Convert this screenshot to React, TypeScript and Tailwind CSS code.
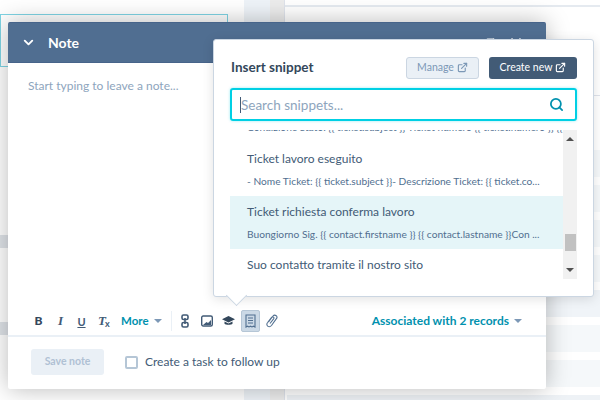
import { ArrowUpRight, ChevronDown, ExternalLink, Search, X } from 'lucide-react';

const font = { row: 'whitespace-nowrap text-[10.2px] leading-[16px] text-[#516f90]' };

const Caret = ({ className }: { className: string }) => (
  <span className={`h-0 w-0 border-x-[4px] border-t-[4px] border-x-transparent ${className}`} />
);

const Snippet = ({ title, body, active }: { title: string; body: string; active?: boolean }) => (
  <div className={`h-[53px] shrink-0 pl-[17px] pt-[7px] ${active ? 'bg-[#e5f5f8]' : ''}`}>
    <div className="text-[12px] leading-[18px] text-[#425b76]">{title}</div>
    <div className={`mt-[5px] ${font.row}`}>{body}</div>
  </div>
);

function Toolbar() {
  return (
    <div className="flex h-[38px] items-center justify-between border-b-2 border-[#eaf0f6] pl-[25px] pr-[24px] pt-[8px]">
      <div className="flex items-center">
        <span className="w-[11px] text-center text-[12px] font-black text-[#33475b]">B</span>
        <span className="ml-[11px] w-[11px] text-center font-['Liberation_Serif',serif] text-[13px] font-bold italic text-[#425b76]">I</span>
        <span className="ml-[10px] w-[11px] text-center text-[11px] font-bold leading-[13px] text-[#425b76] underline">U</span>
        <span className="relative ml-[11px] w-[11px] font-['Liberation_Serif',serif] text-[13px] font-bold italic text-[#425b76]">
          T
          <span className="absolute left-[7px] top-[6px] font-['Lato',sans-serif] text-[9px] not-italic">x</span>
        </span>
        <span className="ml-[12px] w-[28px] whitespace-nowrap text-[11.5px] font-bold text-[#0091ae]">More</span>
        <Caret className="ml-[5px] border-t-[#7c98b6]" />
        <span className="ml-[9px] h-[20px] w-px bg-[#eaf0f6]" />
        <svg className="ml-[8px] h-[14px] w-[10px]" viewBox="0 0 10 14" fill="none" stroke="#425b76" strokeWidth="1.6">
          <rect x="2" y="1" width="6" height="4.5" rx="1.5" />
          <rect x="2" y="8.5" width="6" height="4.5" rx="1.5" />
          <path d="M5 4v6" />
        </svg>
        <svg className="ml-[11px] h-[12px] w-[12px]" viewBox="0 0 12 12">
          <rect x=".7" y="1" width="10.6" height="10" rx="1.5" fill="#fff" stroke="#425b76" strokeWidth="1.4" />
          <path d="M2 10l3.5-3 1.5 1 3-3v5z" fill="#425b76" />
        </svg>
        <svg className="ml-[9px] h-[12px] w-[13px]" viewBox="0 0 13 12" fill="#33475b">
          <path d="M6.5 1L13 4.2 6.5 7.4 0 4.2z" />
          <path d="M2.5 6.6v2.2c1 1.3 7 1.3 8 0V6.6L6.500 8.600z" />
        </svg>
        <span className="ml-[6px] flex h-[22px] w-[19px] items-center justify-center rounded-[2px] border border-[#b5c6d6] bg-[#cbd9e6]">
          <svg className="h-[14px] w-[11px]" viewBox="0 0 11 14" fill="none" stroke="#516f90" strokeWidth="1.1">
            <path d="M1 1h9v12l-1.500-.8-1.500.8-1.500-.8-1.500.8-1.500-.8-1.500.8z" />
            <path d="M3 4h5M3 6.500h5M3 9h5" />
          </svg>
        </span>
        <svg className="ml-[6px] h-[14px] w-[12px]" viewBox="0 0 12 14" fill="none" stroke="#516f90" strokeWidth="1.1">
          <path d="M2.500 8l4.500-6c1-1.200 2.400-.9 3.200-.3.800.7 1 2 .2 3L5.500 11.500c-1.300 1.500-2.800 1.400-3.800.6-1-.8-1.200-2.300-.1-3.600l4-5.200c.6-.7 1.400-.6 1.900-.2.500.4.600 1.100.1 1.800L4 9.500" />
        </svg>
      </div>
      <div className="flex items-center">
        <span className="text-[12px] font-bold text-[#0091ae]">Associated with 2 records</span>
        <Caret className="ml-[5px] border-t-[#7c98b6]" />
      </div>
    </div>
  );
}

function NoteWindow() {
  return (
    <div className="absolute left-[8px] top-[22px] flex h-[367px] w-[538px] flex-col rounded-[2px] bg-white shadow-[0_0_24px_rgba(0,0,0,0.28)]">
      <div className="flex h-[41px] shrink-0 items-center justify-between rounded-t-[2px] border-y border-[#47648a] bg-[#506e91] pl-[13px] pr-[22px]">
        <div className="flex items-center">
          <ChevronDown className="h-[15px] w-[15px] text-white" strokeWidth={3} />
          <span className="ml-[12px] text-[14px] font-bold text-white">Note</span>
        </div>
        <div className="flex items-center gap-[10px]">
          <ArrowUpRight className="h-[15px] w-[15px] text-white" strokeWidth={2.5} />
          <X className="h-[16px] w-[16px] text-white" strokeWidth={2.5} />
        </div>
      </div>
      <div className="flex-1 pl-[20px] pt-[14px] text-[12px] leading-[18px] text-[#8ea5bd]">Start typing to leave a note...</div>
      <Toolbar />
      <div className="flex h-[52px] shrink-0 items-center pb-[2px] pl-[23px]">
        <span className="flex h-[26px] w-[73px] items-center justify-center rounded-[3px] bg-[#eaf0f6] text-[10.5px] font-bold text-[#b0c1d4]">Save note</span>
        <span className="ml-[21px] h-[13px] w-[13px] rounded-[2px] border-2 border-[#b5c6d6] bg-white" />
        <span className="ml-[7px] text-[12px] text-[#425b76]">Create a task to follow up</span>
      </div>
    </div>
  );
}

function SnippetPopover() {
  return (
    <div className="absolute left-[213px] top-[39px] h-[258px] w-[381px] rounded-[3px] border border-[#cbd6e2] bg-white px-[16px] shadow-[0_2px_12px_rgba(0,0,0,0.12)]">
      <div className="flex h-[48px] items-center justify-between pt-[7px]">
        <span className="pl-[1px] text-[13.5px] font-bold text-[#33475b]">Insert snippet</span>
        <div className="flex items-center gap-[10px]">
          <span className="flex h-[22px] w-[73px] items-center justify-center gap-[3px] rounded-[3px] border border-[#cbd6e2] bg-[#eaf0f6] text-[10.5px] text-[#7c98b6]">
            Manage <ExternalLink className="h-[11px] w-[11px]" strokeWidth={2.5} />
          </span>
          <span className="flex h-[22px] w-[88px] items-center justify-center gap-[3px] rounded-[3px] bg-[#425b76] text-[10.5px] text-white">
            Create new <ExternalLink className="h-[11px] w-[11px]" strokeWidth={2.5} />
          </span>
        </div>
      </div>
      <div className="flex h-[33px] items-center justify-between rounded-[3px] border-2 border-[#00d0e4] pl-[8px] pr-[11px] shadow-[0_0_3px_rgba(0,208,228,0.4)]">
        <span className="border-l border-[#425b76] text-[13.5px] leading-[16px] text-[#8ea5bd]">Search snippets...</span>
        <Search className="h-[15px] w-[15px] text-[#0091ae]" strokeWidth={2.8} />
      </div>
      <div className="mt-[9px] flex h-[149px]">
        <div className="flex min-w-0 flex-1 flex-col overflow-hidden">
          <div className={`-mt-[11px] mb-[8px] h-[16px] shrink-0 pl-[17px] ${font.row}`}>
            Condizione Stato: {'{{ ticket.subject }}'} Ticket numero {'{{ ticket.numero }}'} {'{{ ticket.co...'}
          </div>
          <Snippet title="Ticket lavoro eseguito" body="- Nome Ticket: {{ ticket.subject }}- Descrizione Ticket: {{ ticket.co..." />
          <Snippet active title="Ticket richiesta conferma lavoro" body="Buongiorno Sig. {{ contact.firstname }} {{ contact.lastname }}Con ..." />
          <Snippet title="Suo contatto tramite il nostro sito" body="" />
        </div>
        <div className="flex w-[14px] shrink-0 flex-col items-center bg-[#f1f1f1] py-[7px]">
          <span className="h-0 w-0 border-x-[4px] border-b-[4px] border-x-transparent border-b-[#505050]" />
          <span className="mt-[93px] h-[17px] w-[11px] bg-[#c1c1c1]" />
          <span className="mt-[17px] h-0 w-0 border-x-[4px] border-t-[4px] border-x-transparent border-t-[#505050]" />
        </div>
      </div>
      <span className="absolute left-[15px] top-[248px] h-[15px] w-[15px] rotate-45 border-b border-r border-[#cbd6e2] bg-white" />
    </div>
  );
}

function Background() {
  return (
    <div className="flex h-full">
      <div className="w-[244px] pt-[14px]">
        <div className="h-[53px] w-[228px] border border-[#7fd4e4] bg-white" />
        <div className="mt-[168px] h-[13px] bg-[#dfe3e8]" />
        <div className="mt-[74px] h-[13px] bg-[#dfe3e8]" />
      </div>
      <div className="w-[26px] bg-[#eef3f8]" />
      <div className="w-[14px] bg-[#ececec]" />
      <div className="flex-1 border-l border-[#dfe3eb] bg-white">
        <div className="mt-[5px] border-t-2 border-[#e5eaf0]" />
        <div className="mt-[88px] border-t border-[#dfe3eb]" />
        <div className="mt-[54px] flex flex-col gap-[8px] pl-[2px]">
          <div className="h-[27px] bg-[#f5f8fa]" />
          <div className="h-[27px] bg-[#f5f8fa]" />
          <div className="h-[27px] bg-[#f5f8fa]" />
          <div className="h-[27px] bg-[#f5f8fa]" />
          <div className="h-[27px] bg-[#f0f4f8]" />
          <div className="h-[27px] bg-[#f5f8fa]" />
          <div className="h-[27px] bg-[#f5f8fa]" />
          <div className="h-[27px] bg-[#eef2f6]" />
        </div>
      </div>
    </div>
  );
}

export default function App() {
  return (
    <div className="relative h-[400px] w-[600px] overflow-hidden bg-white font-['Lato',sans-serif]">
      <Background />
      <NoteWindow />
      <SnippetPopover />
    </div>
  );
}
